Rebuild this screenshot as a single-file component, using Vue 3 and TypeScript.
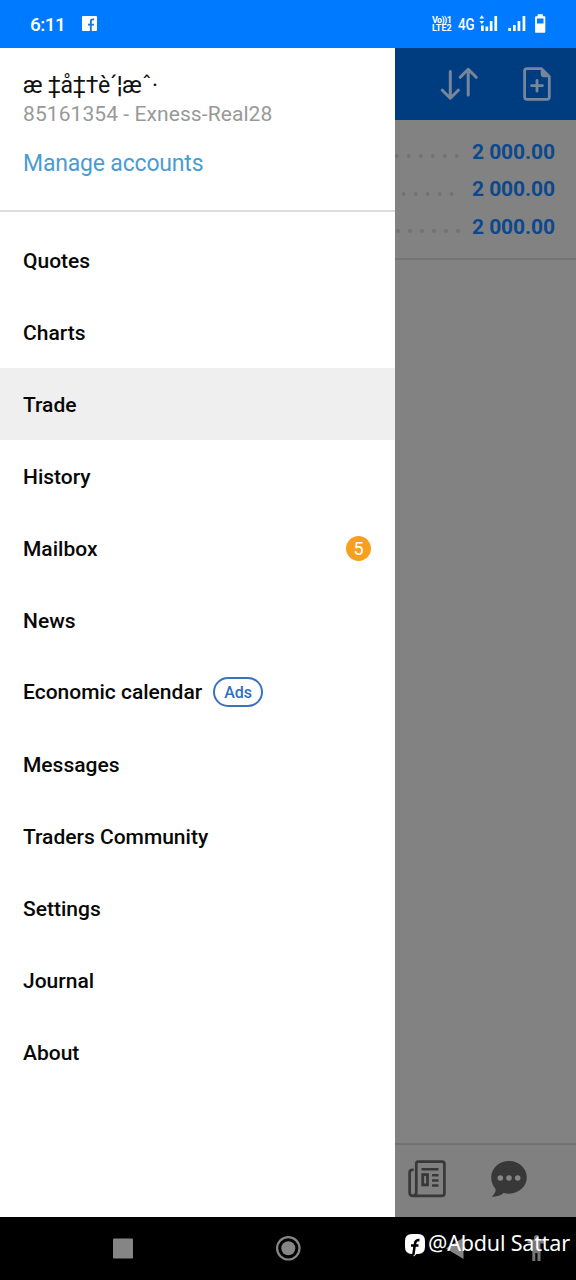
<script setup lang="ts">
interface MenuItem {
  label: string
  active?: boolean
  count?: number
  tag?: string
}

interface BalanceRow {
  value: string
  dots: number[]
}

const menu: MenuItem[] = [
  { label: 'Quotes' },
  { label: 'Charts' },
  { label: 'Trade', active: true },
  { label: 'History' },
  { label: 'Mailbox', count: 5 },
  { label: 'News' },
  { label: 'Economic calendar', tag: 'Ads' },
  { label: 'Messages' },
  { label: 'Traders Community' },
  { label: 'Settings' },
  { label: 'Journal' },
  { label: 'About' },
]

const balances: BalanceRow[] = [
  { value: '2 000.00', dots: [1.7, 13.7, 25.7, 37.7, 49.8, 61.8] },
  { value: '2 000.00', dots: [8.7, 20.7, 32.7, 44.7, 56.8] },
  { value: '2 000.00', dots: [3, 15, 27, 39, 51, 63] },
]
</script>

<template>
  <div class="screen">
    <header class="status">
      <span class="time">6:11</span>
      <svg class="fb" width="15" height="15" viewBox="0 0 15 15">
        <rect width="15" height="15" rx="1" fill="#fff" />
        <path d="M8.8 15V9.2M6 8.6h6M8.8 9.5V5.6Q8.8 3.4 11 3.4h1.2" fill="none" stroke="#1b74dc" stroke-width="1.9" />
      </svg>
      <div class="volte"><span class="vo">Vo))1</span><span>LTE2</span></div>
      <span class="net">4G</span>
      <svg class="signals" width="68" height="20" viewBox="0 0 68 20" fill="#fff">
        <path d="M1.8 1.2 4.2 4.6H-.6zM1.8 10-.6 7h4.800zM1 11.500h2.700V17H1zM5.500 12.500h2.700V17H5.500zM9.800 7h2.700v10H9.800zM14.400 2h2.700v15h-2.700z" />
        <path d="M28.300 14H31v3h-2.700zM33 11h2.700v6H33zM37.600 7h2.700v10h-2.700zM42.600 2h2.700v15h-2.700z" />
        <path fill-rule="evenodd" d="M57.700.3h5.100v2h1.800q.7 0 .7.7v15q0 .7-.7.7h-8.800q-.7 0-.7-.7V3q0-.7.7-.7h1.900zM56.900 4.500v5h6.600v-5z" />
      </svg>
    </header>

    <div class="body">
      <aside class="drawer">
        <section class="account">
          <div class="name">æ ‡å‡†è´¦æˆ·</div>
          <div class="server">85161354 - Exness-Real28</div>
          <div class="manage">Manage accounts</div>
        </section>
        <nav class="menu">
          <div v-for="item in menu" :key="item.label" class="item" :class="{ active: item.active, tagged: item.tag }">
            <span class="label">{{ item.label }}</span>
            <span v-if="item.tag" class="tag">{{ item.tag }}</span>
            <span v-if="item.count" class="count">{{ item.count }}</span>
          </div>
        </nav>
      </aside>

      <main class="trade">
        <div class="toolbar">
          <svg width="38" height="34" viewBox="0 0 38 34" fill="none" stroke="#77869a" stroke-width="3" stroke-linecap="round" stroke-linejoin="round">
            <path d="M10.3 4.500v26M2.300 23.200l8 8 8-8M28.200 28V2.500M20.200 10.300l8-8 8 8" />
          </svg>
          <svg width="28" height="34" viewBox="0 0 28 34" fill="none" stroke="#77869a" stroke-width="2.8" stroke-linejoin="round">
            <path d="M4 1.700h14.600l7.700 7.700V30q0 2.300-2.300 2.300H4Q1.600 32.300 1.600 30V4Q1.600 1.700 4 1.700z" />
            <path d="M18.500 2v5q0 2.400 2.400 2.400h5.200z" fill="#77869a" stroke-width="1.5" />
            <path d="M14 13.300v10.800M8.600 18.700h10.800" stroke-linecap="round" />
          </svg>
        </div>
        <div class="balances">
          <div v-for="(row, i) in balances" :key="i" class="balance">
            <svg width="77" height="10" viewBox="0 0 77 10">
              <circle v-for="x in row.dots" :key="x" :cx="x" cy="5" r="1.9" fill="#727272" />
            </svg>
            <span>{{ row.value }}</span>
          </div>
        </div>
        <div class="tabs">
          <svg width="38" height="38" viewBox="0 0 38 38" fill="none" stroke="#383838">
            <path d="M10.200 1.600h24q2.200 0 2.200 2.200v29.800q0 2.200-2.200 2.200H5q-3.400 0-3.400-3.400V12.600q0-2.800 3-2.800M8.300 33V3.600q0-2 2-2M8.300 32q0 3.800-3.300 3.800" stroke-width="2.7" stroke-linecap="round" />
            <path d="M13.500 9.300h17M24 15.200h6.500M24 20.500h6.500M24 25.500h6.500" stroke-width="2.6" />
            <rect x="14.700" y="14.600" width="4.800" height="10.300" stroke-width="2.8" />
          </svg>
          <svg width="38" height="38" viewBox="0 0 38 38">
            <path d="M19 1C9 1 1.200 8.300 1.200 17.300c0 4.800 1.600 8.700 4.400 11.700.3 3.200-1.500 5.400-4 7.800 5.400-.1 9.200-1.200 12-3.800 1.800.5 3.500.7 5.400.7 10 0 17.800-7.300 17.800-16.400S29 1 19 1z" fill="#383838" />
            <g fill="#858585"><circle cx="10.300" cy="18" r="2.800" /><circle cx="19" cy="18" r="2.800" /><circle cx="27.700" cy="18" r="2.800" /></g>
          </svg>
        </div>
      </main>
    </div>

    <footer class="system">
      <svg class="keys" width="576" height="63" viewBox="0 0 576 63">
        <rect x="113" y="21.500" width="20" height="20" rx="1" fill="#858585" />
        <circle cx="288.300" cy="31.300" r="11.200" fill="none" stroke="#858585" stroke-width="2.200" />
        <circle cx="288.300" cy="31.300" r="7" fill="#858585" />
        <path d="M446 31.500 463.500 20.500V42z" fill="#858585" />
        <path d="M527.500 22.500h17v4h-4V44h-3v-8h-2.200v8h-3V26.500h-4.800z" fill="#777" />
        <circle cx="536.500" cy="20.500" r="2.500" fill="#777" />
      </svg>
      <div class="credit">
        <svg width="20" height="23" viewBox="0 0 20 23">
          <path d="M7 0h6q7 0 7 7v6q0 7-7 7h-1.500L9 22.500 8 20H7q-7 0-7-7V7Q0 0 7 0z" fill="#fff" />
          <path d="M8.300 21 10 9.500Q10.500 5.800 14.500 6M6 11.500h7.500" fill="none" stroke="#000" stroke-width="2.500" />
        </svg>
        <span>@Abdul Sattar</span>
      </div>
    </footer>
  </div>
</template>

<style>
body {
  margin: 0;
}
</style>

<style scoped>
.screen {
  width: 576px;
  height: 1280px;
  display: flex;
  flex-direction: column;
  overflow: hidden;
  font-family: Roboto, "Liberation Sans", sans-serif;
  background: #000;
}
.screen span,
.account div {
  white-space: nowrap;
}
.status {
  height: 48px;
  box-sizing: border-box;
  display: flex;
  align-items: center;
  padding: 0 28px 0 30px;
  background: #007aff;
  color: #fff;
}
.time {
  width: 52px;
  font-size: 19px;
  font-weight: 500;
  line-height: 24px;
  letter-spacing: -0.5px;
  padding-top: 1px;
}
.fb {
  margin-bottom: 1px;
}
.volte {
  margin-left: auto;
  width: 26px;
  display: flex;
  flex-direction: column;
  font-size: 9px;
  line-height: 8.5px;
  font-weight: 700;
}
.vo {
  letter-spacing: -0.6px;
}
.net {
  width: 22px;
  font-size: 17px;
  line-height: 20px;
  transform: scaleX(0.78);
  transform-origin: left;
  font-weight: 500;
}
.signals {
  overflow: visible;
}
.body {
  height: 1169px;
  display: flex;
}
.drawer {
  width: 395px;
  background: #fff;
}
.account {
  height: 164px;
  box-sizing: border-box;
  padding: 24px 23px 0;
  border-bottom: 2px solid #dcdcdc;
}
.name {
  font-size: 23px;
  line-height: 28px;
  letter-spacing: -0.25px;
  color: #111;
}
.server {
  font-size: 21px;
  line-height: 28px;
  color: #999;
  letter-spacing: 0.08px;
}
.manage {
  margin-top: 22px;
  font-size: 23px;
  line-height: 28px;
  color: #4b9cd3;
  letter-spacing: -0.18px;
}
.menu {
  padding-top: 12px;
}
.item {
  height: 72px;
  box-sizing: border-box;
  display: flex;
  align-items: center;
  padding: 1px 24px 0 23px;
  font-size: 21px;
  font-weight: 500;
  color: #080808;
}
.tagged {
  padding: 0 24px 1px 23px;
}
.active {
  background: #efefef;
}
.tag {
  margin-left: 11px;
  width: 50px;
  height: 30px;
  box-sizing: border-box;
  border: 2px solid #3a72bd;
  border-radius: 15px;
  font-size: 16px;
  line-height: 27px;
  text-align: center;
  color: #2f70c0;
}
.count {
  margin-left: auto;
  width: 25px;
  height: 25px;
  border-radius: 50%;
  background: #f7a01f;
  color: #fff;
  font-size: 18px;
  font-weight: 400;
  line-height: 26px;
  text-align: center;
}
.trade {
  width: 181px;
  display: flex;
  flex-direction: column;
  background: #828282;
}
.toolbar {
  height: 72px;
  box-sizing: border-box;
  display: flex;
  justify-content: space-between;
  padding: 19px 25px 0 45px;
  background: #003d80;
}
.balances {
  height: 140px;
  box-sizing: border-box;
  padding-top: 12.8px;
  border-bottom: 2px solid #747474;
}
.balance {
  height: 37.5px;
  display: flex;
  align-items: center;
  font-size: 21px;
  font-weight: 700;
  letter-spacing: -0.07px;
  color: #0b488e;
}
.balance svg {
  margin-top: 9px;
}
.tabs {
  height: 74px;
  box-sizing: border-box;
  margin-top: auto;
  display: flex;
  gap: 44px;
  padding: 15px 0 0 13px;
  border-top: 2px solid #727272;
  background: #808080;
}
.system {
  height: 63px;
  position: relative;
}
.keys {
  display: block;
}
.credit {
  position: absolute;
  left: 405px;
  top: 11px;
  display: flex;
  align-items: center;
  gap: 3px;
  color: #fff;
  font-family: "Noto Sans", sans-serif;
  font-size: 21.5px;
  line-height: 26px;
  letter-spacing: -0.18px;
}
.credit svg {
  margin-top: 6px;
}
</style>
